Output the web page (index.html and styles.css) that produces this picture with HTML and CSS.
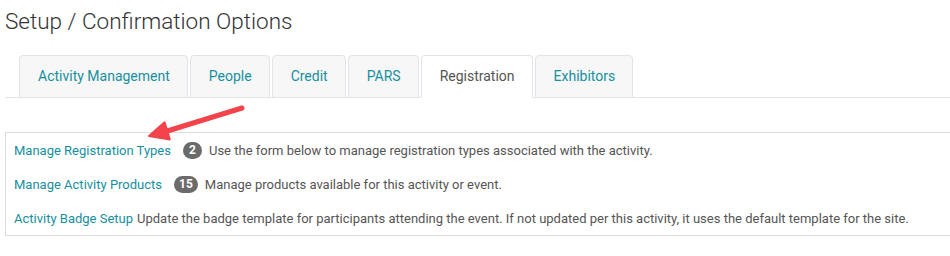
FILE: index.html
```html
<!DOCTYPE html>
<html lang="en">
<head>
  <meta charset="UTF-8" />
  <title>Setup / Confirmation Options</title>
  <link rel="stylesheet" href="styles.css">
</head>
<body>
  <div class="page">
    <h1 class="page-title">Setup / Confirmation Options</h1>

    <ul class="tabs">
      <li><a href="#">Activity Management</a></li>
      <li><a href="#">People</a></li>
      <li><a href="#">Credit</a></li>
      <li><a href="#">PARS</a></li>
      <li class="active"><a href="#">Registration</a></li>
      <li><a href="#">Exhibitors</a></li>
    </ul>

    <div class="options">
      <div class="option">
        <a href="#">Manage Registration Types</a>
        <span class="badge">2</span>
        <span class="desc">Use the form below to manage registration types associated with the activity.</span>
      </div>
      <div class="option">
        <a href="#">Manage Activity Products</a>
        <span class="badge">15</span>
        <span class="desc">Manage products available for this activity or event.</span>
      </div>
      <div class="option">
        <a href="#">Activity Badge Setup</a>
        <span class="desc single">Update the badge template for participants attending the event. If not updated per this activity, it uses the default template for the site.</span>
      </div>
    </div>

    <svg class="callout" width="950" height="256" viewBox="0 0 950 256">
      <line x1="242" y1="108" x2="164" y2="132" stroke="#f2444a" stroke-width="5" stroke-linecap="round"/>
      <polygon points="149,136 164.6,122.2 169.8,139.4" fill="#f2444a" stroke="#f2444a" stroke-width="2" stroke-linejoin="round"/>
    </svg>
  </div>
</body>
</html>
```

FILE: styles.css
```css
:root {
  --teal: #17909e;
  --text: #555;
  --border: #e1e4e8;
}
* {
  margin: 0;
  padding: 0;
  box-sizing: border-box;
}
body {
  font-family: Roboto, "Liberation Sans", sans-serif;
  color: var(--text);
  background: #fff;
  overflow: hidden;
}
.page {
  position: relative;
  padding: 0 0 0 5px;
}
.page-title {
  font-size: 22.5px;
  font-weight: 300;
  color: #333;
  line-height: 26px;
  padding-top: 8px;
}
.tabs {
  list-style: none;
  display: flex;
  gap: 2px;
  margin-top: 21px;
  padding-left: 14px;
  border-bottom: 1px solid var(--border);
}
.tabs li {
  margin-bottom: -1px;
}
.tabs li a {
  display: block;
  height: 43px;
  line-height: 41px;
  padding: 0 17px 0 18px;
  font-size: 14px;
  color: var(--teal);
  text-decoration: none;
  background: #f7f7f7;
  border: 1px solid var(--border);
  border-radius: 4px 4px 0 0;
}
.tabs li.active a {
  background: #fff;
  color: #555;
  border-bottom-color: #fff;
}
.options {
  margin-top: 34px;
  margin-right: -10px;
  border: 1px solid #ddd;
}
.option {
  display: flex;
  align-items: center;
  height: 34px;
  padding-left: 8px;
  font-size: 13px;
}
.option a {
  color: var(--teal);
  text-decoration: none;
}
.badge {
  display: inline-block;
  min-width: 19px;
  height: 17px;
  line-height: 17px;
  padding: 0 5px;
  margin: 0 7px 0 12px;
  border-radius: 9px;
  background: #6b6b6b;
  color: #fff;
  font-size: 12px;
  font-weight: 700;
  text-align: center;
}
.desc.single {
  margin-left: 4px;
}
.callout {
  position: absolute;
  left: 0;
  top: 0;
  pointer-events: none;
}
```
